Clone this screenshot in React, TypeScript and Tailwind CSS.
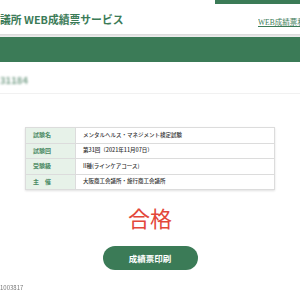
import React from 'react';

const rows: [string, string][] = [
  ['試験名', 'メンタルヘルス・マネジメント検定試験'],
  ['試験回', '第31回（2021年11月07日）'],
  ['受験級', 'II種(ラインケアコース)'],
  ['主　催', '大阪商工会議所・施行商工会議所'],
];

const App: React.FC = () => {
  return (
    <div className="w-[300px] h-[300px] overflow-hidden bg-white font-['Noto_Sans_CJK_JP',sans-serif]">
      {/* top strip */}
      <div className="flex justify-end">
        <div className="h-[4px] w-[85px] bg-[#3b7b57]" />
      </div>

      {/* header */}
      <div className="h-[30px] flex items-center justify-between">
        <h1 className="text-[10.8px] font-semibold text-[#3b7b57] leading-none whitespace-nowrap pt-[1px]">
          議所 WEB成績票サービス
        </h1>
        <div className="w-[42px] overflow-hidden pt-[8px]">
          <a className="block text-[7.5px] text-[#3b7b57] underline whitespace-nowrap font-['Liberation_Serif','Noto_Sans_CJK_JP',serif]">
            WEB成績票利用
          </a>
        </div>
      </div>
      <div className="h-[3px] bg-gradient-to-b from-[#d8d8d8] to-[#f0f0f0]" />

      {/* green band */}
      <div className="h-[25px] bg-[#3b7b57]" />

      {/* member no */}
      <div className="h-[32px] flex items-center border-b border-[#f1f1f1]">
        <span className="text-[9.5px] font-semibold text-[#7fa590] blur-[0.8px] pt-[6px]">31184</span>
      </div>

      {/* result table */}
      <div className="mt-[33px] mx-[25px] shadow-[0_1px_2px_rgba(0,0,0,0.12)]">
        <table className="w-full border-collapse">
          <tbody>
            {rows.map(([k, v]) => (
              <tr key={k} className="h-[15.5px]">
                <td className="w-[50px] bg-[#e7f2e9] border border-[#dcdcdc] pl-[7px] text-[6px] font-bold text-[#4a8a63] whitespace-nowrap leading-none">
                  {k}
                </td>
                <td className="border border-[#dcdcdc] pl-[7px] text-[5.5px] font-medium text-[#333] whitespace-nowrap leading-none">
                  {v}
                </td>
              </tr>
            ))}
          </tbody>
        </table>
      </div>

      {/* pass */}
      <div className="mt-[14px] text-center text-[22px] leading-[26px] text-[#e3473a]">合格</div>

      {/* print button */}
      <div className="mt-[16px] flex justify-center">
        <button className="w-[95px] h-[24px] rounded-full bg-[#3b7b57] text-white text-[8.5px] font-bold">
          成績票印刷
        </button>
      </div>

      <div className="mt-[15px] text-[6px] text-[#777] leading-none blur-[0.3px]">1003817</div>
    </div>
  );
};

export default App;
